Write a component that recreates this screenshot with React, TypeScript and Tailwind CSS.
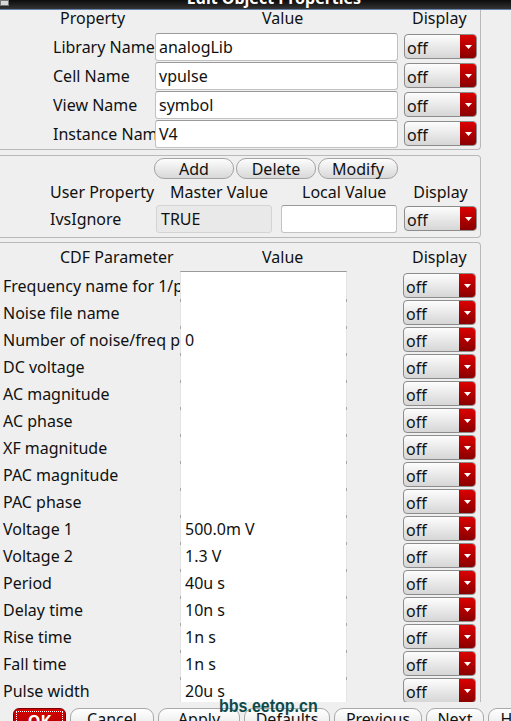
import React from "react";

const cdfRows: Array<[string, string]> = [
	["Frequency name for 1/period", ""],
	["Noise file name", ""],
	["Number of noise/freq pairs", "0"],
	["DC voltage", ""],
	["AC magnitude", ""],
	["AC phase", ""],
	["XF magnitude", ""],
	["PAC magnitude", ""],
	["PAC phase", ""],
	["Voltage 1", "500.0m V"],
	["Voltage 2", "1.3 V"],
	["Period", "40u s"],
	["Delay time", "10n s"],
	["Rise time", "1n s"],
	["Fall time", "1n s"],
	["Pulse width", "20u s"],
];

function OffSelect() {
	return (
		<div className="flex h-[25px] w-[73px] shrink-0 overflow-hidden rounded-[4px] border border-[#8c8c8c] bg-linear-to-b from-[#fdfdfd] to-[#d6d6d6]">
			<span className="flex flex-1 items-center pl-[2px] pt-[2px]">off</span>
			<span className="flex w-[16px] items-center justify-center bg-linear-to-b from-[#dc0000] to-[#8a0000]">
				<svg width="7" height="4" viewBox="0 0 7 4">
					<path d="M0 0h7L3.5 4z" fill="#fff" />
				</svg>
			</span>
		</div>
	);
}

function TextBox({ value, w }: { value: string; w: string }) {
	return (
		<div
			className={`flex h-[28px] ${w} shrink-0 items-center rounded-[3px] border border-[#c2c2c2] border-t-[#9a9a9a] bg-white pl-[3px]`}
		>
			{value}
		</div>
	);
}

function BarButton({ label, w }: { label: string; w: string }) {
	return (
		<div
			className={`flex h-[26px] ${w} shrink-0 justify-center rounded-t-[9px] border border-[#a9a9a9] bg-linear-to-b from-[#ffffff] to-[#e2e2e2] leading-[20px]`}
		>
			{label}
		</div>
	);
}

export default function App() {
	return (
		<div className="relative h-[721px] w-[511px] overflow-hidden bg-[#efefef] font-['Noto_Sans',sans-serif] text-[16px] leading-[20px] text-[#111]">
			{/* title bar */}
			<div className="relative h-[10px] overflow-hidden border-b border-[#6582ad] bg-linear-to-b from-[#0c0c0c] to-[#343434]">
				<div className="absolute left-0 top-0 h-[6px] w-[9px] border border-[#777] bg-[#d8d8d8]" />
				<div className="mt-[-12px] flex justify-center pl-[37px] text-[16px] font-bold leading-[20px] text-white">
					Edit Object Properties
				</div>
			</div>

			{/* properties */}
			<div className="w-[481px] rounded-br-[4px] border-b border-r border-[#b9b9b9] pb-[1px]">
				<div className="flex h-[22px] items-start pl-[60px]">
					<span className="mt-[-2px] w-[202px] shrink-0">Property</span>
					<span className="mt-[-2px] w-[150px] shrink-0">Value</span>
					<span className="mt-[-2px] shrink-0">Display</span>
				</div>
				{[
					["Library Name", "analogLib"],
					["Cell Name", "vpulse"],
					["View Name", "symbol"],
					["Instance Name", "V4"],
				].map(([label, value]) => (
					<div key={label} className="flex h-[29px] items-center pl-[53px]">
						<span className="w-[102px] shrink-0 overflow-hidden whitespace-nowrap">{label}</span>
						<TextBox value={value} w="w-[243px]" />
						<div className="ml-[6px]">
							<OffSelect />
						</div>
					</div>
				))}
			</div>

			{/* user property */}
			<div className="mt-[5px] h-[83px] w-[481px] rounded-r-[4px] border-y border-r border-[#b9b9b9]">
				<div className="flex gap-[2px] pl-[154px] pt-[2px]">
					{["Add", "Delete", "Modify"].map((b) => (
						<div
							key={b}
							className="flex h-[21px] w-[80px] items-center justify-center rounded-[10px] border border-[#a3a3a3] bg-linear-to-b from-[#fdfdfd] to-[#d8d8d8]"
						>
							{b}
						</div>
					))}
				</div>
				<div className="flex h-[25px] items-center pl-[50px]">
					<span className="w-[120px] shrink-0 whitespace-nowrap">User Property</span>
					<span className="w-[111px] shrink-0 whitespace-nowrap">Master Value</span>
					<span className="w-[123px] shrink-0 whitespace-nowrap pl-[21px]">Local Value</span>
					<span className="w-[73px] shrink-0 text-center">Display</span>
				</div>
				<div className="flex h-[29px] items-center pl-[50px]">
					<span className="w-[106px] shrink-0">IvsIgnore</span>
					<div className="flex h-[28px] w-[116px] shrink-0 items-center rounded-[3px] border border-[#d4d4d4] bg-[#e9e9e9] pl-[4px]">
						TRUE
					</div>
					<div className="ml-[9px]">
						<TextBox value="" w="w-[116px]" />
					</div>
					<div className="ml-[7px]">
						<OffSelect />
					</div>
				</div>
			</div>

			{/* CDF parameters */}
			<div className="mt-[4px] w-[481px] rounded-tr-[4px] border-r border-t border-[#b9b9b9]">
				<div className="flex h-[28px] items-center pl-[60px]">
					<span className="w-[202px] shrink-0">CDF Parameter</span>
					<span className="w-[150px] shrink-0">Value</span>
					<span className="shrink-0">Display</span>
				</div>
				<div className="h-[431px] overflow-hidden">
					<div className="ml-[180px] h-[1px] w-[167px] rounded-t-[3px] bg-[#9a9a9a]" />
					{cdfRows.map(([label, value], i) => (
						<div key={label} className="flex h-[27px] items-center">
							<span className="w-[180px] shrink-0 overflow-hidden whitespace-nowrap pl-[3px]">
								{label}
							</span>
							<div className="relative flex h-[27px] w-[167px] shrink-0 items-center border-x border-[#e4e4e4] bg-white pl-[4px]">
								{i > 0 && (
									<>
										<span className="absolute -left-px top-0 h-[3px] w-px bg-[#a8a8a8]" />
										<span className="absolute -right-px top-0 h-[3px] w-px bg-[#a8a8a8]" />
									</>
								)}
								{value}
							</div>
							<div className="ml-[56px]">
								<OffSelect />
							</div>
						</div>
					))}
				</div>
			</div>

			{/* bottom buttons */}
			<div className="flex gap-[4px] pl-[13px] pt-[6px]">
				<div className="flex h-[26px] w-[53px] shrink-0 justify-center rounded-t-[6px] border border-[#7a0000] bg-linear-to-b from-[#d80000] to-[#a00000] p-[2px]">
					<div className="flex w-full justify-center border border-dotted border-white font-bold leading-[18px] text-white">
						OK
					</div>
				</div>
				<BarButton label="Cancel" w="w-[84px]" />
				<BarButton label="Apply" w="w-[82px]" />
				<BarButton label="Defaults" w="w-[86px]" />
				<BarButton label="Previous" w="w-[88px]" />
				<BarButton label="Next" w="w-[58px]" />
				<BarButton label="Help" w="w-[60px]" />
			</div>

			{/* watermark */}
			<div className="absolute left-[219px] top-[698px] origin-bottom scale-y-110 font-['Liberation_Sans',sans-serif] text-[16px] font-bold leading-[18px] text-[#0d4b4b]">
				bbs.eetop.cn
			</div>
		</div>
	);
}
